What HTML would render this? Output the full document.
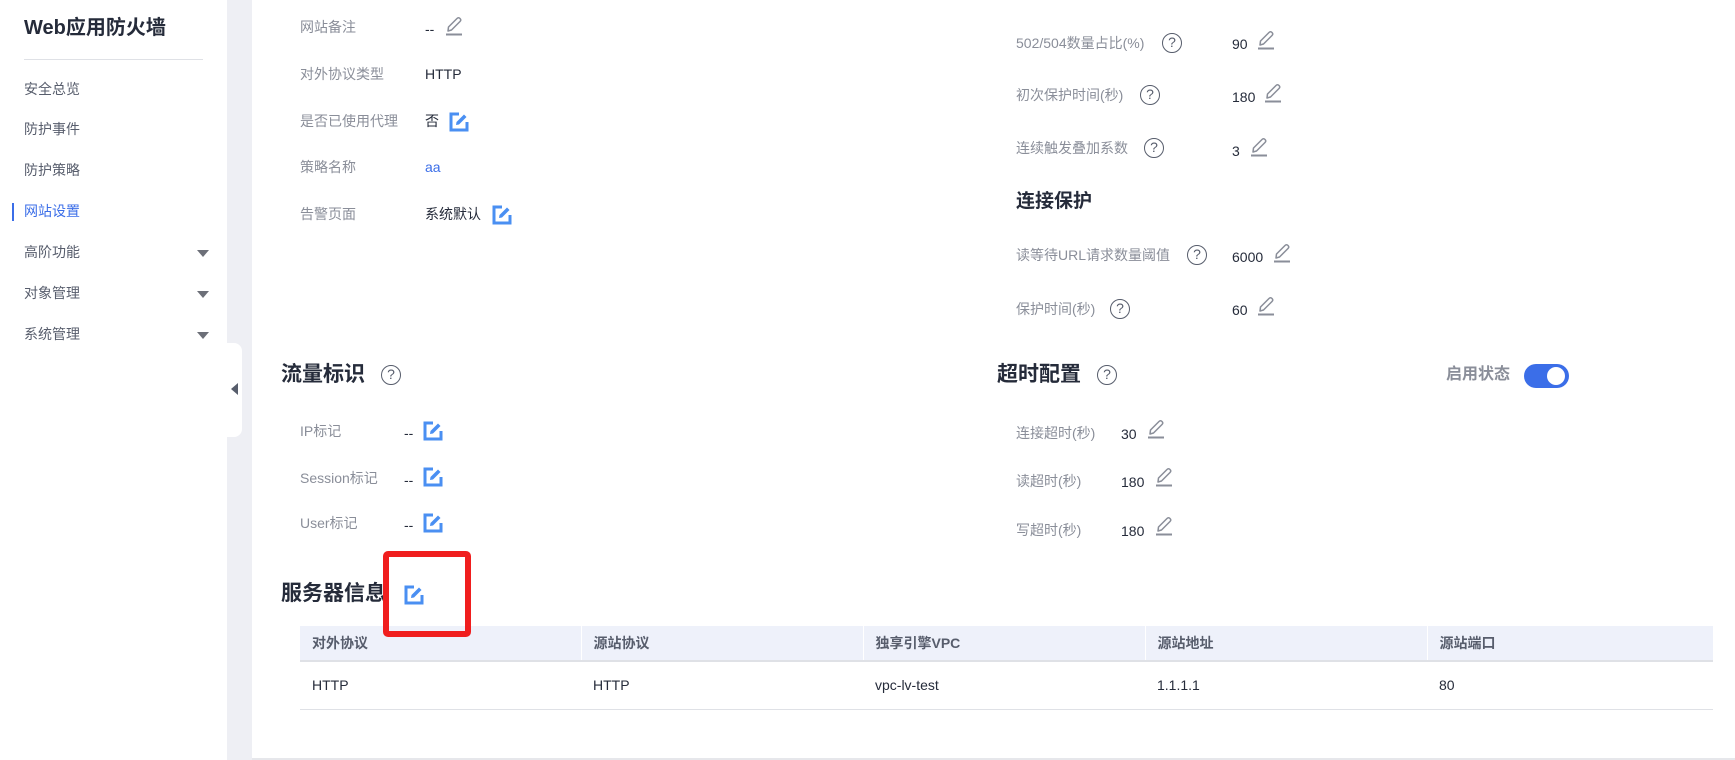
<!DOCTYPE html>
<html><head><meta charset="utf-8"><style>
*{margin:0;padding:0;box-sizing:border-box}
body{width:1735px;height:760px;position:relative;overflow:hidden;background:#fff;font-family:"Liberation Sans","Noto Sans CJK SC",sans-serif;color:#252b3a;font-size:14px}
.a{position:absolute;white-space:nowrap;line-height:1}
.lbl{color:#8a8e99;font-size:14px}
.val{color:#252b3a;font-size:14px}
.menu{color:#575d6c;font-size:14px}
.h{font-weight:bold;font-size:21px;color:#252b3a}
.q{position:absolute;width:20px;height:20px;border:1.6px solid #575d6c;border-radius:50%;font-size:14px;color:#575d6c;text-align:center;line-height:17px}
.arr{position:absolute;width:0;height:0;border-left:6px solid transparent;border-right:6px solid transparent;border-top:7px solid #6c6f78}
th,td{text-align:left;font-size:14px;padding-left:12px}
</style></head><body>
<svg width="0" height="0" style="position:absolute"><defs>
<symbol id="gp" viewBox="0 0 18 20"><path d="M3 15 L3.5 11 L12 2.5 Q13.5 1 15 2.5 Q16.5 4 15 5.5 L6.5 14 Z" fill="none" stroke="#8a8e99" stroke-width="1.5" stroke-linejoin="round"/><line x1="1" y1="18.5" x2="17" y2="18.5" stroke="#8a8e99" stroke-width="2"/></symbol>
<symbol id="bp" viewBox="0 0 20 20"><path d="M10 2 H2 V18 H18 V10" fill="none" stroke="#4a8ff2" stroke-width="3"/><path d="M7 13 L7.5 10 L15 2.5 L17.5 5 L10 12.5 Z" fill="#4a8ff2"/></symbol>
</defs></svg>

<div class="a" style="left:227px;top:0;width:25px;height:760px;background:#eeeff4"></div>
<div class="a" style="left:227px;top:343px;width:15px;height:94px;background:#fff;border-radius:0 8px 8px 0"></div>
<div class="a" style="left:231px;top:383px;width:0;height:0;border-top:6px solid transparent;border-bottom:6px solid transparent;border-right:7px solid #575d6c"></div>
<div class="a" style="left:24px;top:18px;font-size:20px;font-weight:bold;color:#252b3a">Web应用防火墙</div>
<div class="a" style="left:24px;top:59px;width:179px;height:1px;background:#dfe1e6"></div>
<div class="a menu" style="left:24px;top:82px">安全总览</div>
<div class="a menu" style="left:24px;top:122px">防护事件</div>
<div class="a menu" style="left:24px;top:163px">防护策略</div>
<div class="a" style="left:12px;top:203px;width:2px;height:18px;background:#3b6ee8"></div>
<div class="a menu" style="left:24px;top:204px;color:#3b6ee8">网站设置</div>
<div class="a menu" style="left:24px;top:245px">高阶功能</div><div class="arr" style="left:197px;top:250px"></div>
<div class="a menu" style="left:24px;top:286px">对象管理</div><div class="arr" style="left:197px;top:291px"></div>
<div class="a menu" style="left:24px;top:327px">系统管理</div><div class="arr" style="left:197px;top:332px"></div>

<div class="a" style="left:252px;top:758px;width:1483px;height:2px;background:#e6e7eb"></div>

<div class="a lbl" style="left:300px;top:20px">网站备注</div>
<div class="a val" style="left:425px;top:22px">--</div>
<svg class="a" style="left:445px;top:16px" width="18" height="20"><use href="#gp"/></svg>
<div class="a lbl" style="left:300px;top:67px">对外协议类型</div>
<div class="a val" style="left:425px;top:67px">HTTP</div>
<div class="a lbl" style="left:300px;top:114px">是否已使用代理</div>
<div class="a val" style="left:425px;top:114px">否</div>
<svg class="a" style="left:449px;top:112px" width="20" height="20"><use href="#bp"/></svg>
<div class="a lbl" style="left:300px;top:160px">策略名称</div>
<div class="a val" style="left:425px;top:160px;color:#3b6ee8">aa</div>
<div class="a lbl" style="left:300px;top:207px">告警页面</div>
<div class="a val" style="left:425px;top:207px">系统默认</div>
<svg class="a" style="left:492px;top:205px" width="20" height="20"><use href="#bp"/></svg>

<div class="a lbl" style="left:1016px;top:36px">502/504数量占比(%)</div><div class="q" style="left:1162px;top:33px">?</div>
<div class="a val" style="left:1232px;top:37px">90</div><svg class="a" style="left:1257px;top:30px" width="18" height="20"><use href="#gp"/></svg>
<div class="a lbl" style="left:1016px;top:88px">初次保护时间(秒)</div><div class="q" style="left:1140px;top:85px">?</div>
<div class="a val" style="left:1232px;top:90px">180</div><svg class="a" style="left:1264px;top:83px" width="18" height="20"><use href="#gp"/></svg>
<div class="a lbl" style="left:1016px;top:141px">连续触发叠加系数</div><div class="q" style="left:1144px;top:138px">?</div>
<div class="a val" style="left:1232px;top:144px">3</div><svg class="a" style="left:1250px;top:137px" width="18" height="20"><use href="#gp"/></svg>
<div class="a h" style="left:1016px;top:192px;font-size:19px">连接保护</div>
<div class="a lbl" style="left:1016px;top:248px">读等待URL请求数量阈值</div><div class="q" style="left:1187px;top:245px">?</div>
<div class="a val" style="left:1232px;top:250px">6000</div><svg class="a" style="left:1273px;top:243px" width="18" height="20"><use href="#gp"/></svg>
<div class="a lbl" style="left:1016px;top:302px">保护时间(秒)</div><div class="q" style="left:1110px;top:299px">?</div>
<div class="a val" style="left:1232px;top:303px">60</div><svg class="a" style="left:1257px;top:296px" width="18" height="20"><use href="#gp"/></svg>

<div class="a h" style="left:281px;top:364px">流量标识</div><div class="q" style="left:381px;top:365px">?</div>
<div class="a lbl" style="left:300px;top:424px">IP标记</div><div class="a val" style="left:404px;top:426px">--</div>
<svg class="a" style="left:423px;top:421px" width="20" height="20"><use href="#bp"/></svg>
<div class="a lbl" style="left:300px;top:471px">Session标记</div><div class="a val" style="left:404px;top:473px">--</div>
<svg class="a" style="left:423px;top:467px" width="20" height="20"><use href="#bp"/></svg>
<div class="a lbl" style="left:300px;top:516px">User标记</div><div class="a val" style="left:404px;top:518px">--</div>
<svg class="a" style="left:423px;top:513px" width="20" height="20"><use href="#bp"/></svg>

<div class="a h" style="left:997px;top:364px">超时配置</div><div class="q" style="left:1097px;top:365px">?</div>
<div class="a" style="left:1446px;top:367px;font-size:16px;font-weight:bold;color:#8a8e99">启用状态</div>
<div class="a" style="left:1524px;top:364px;width:45px;height:24px;border-radius:12px;background:#3b6ee8"></div>
<div class="a" style="left:1547px;top:367px;width:18px;height:18px;border-radius:50%;background:#fff"></div>
<div class="a lbl" style="left:1016px;top:426px">连接超时(秒)</div><div class="a val" style="left:1121px;top:427px">30</div>
<svg class="a" style="left:1147px;top:419px" width="18" height="20"><use href="#gp"/></svg>
<div class="a lbl" style="left:1016px;top:474px">读超时(秒)</div><div class="a val" style="left:1121px;top:475px">180</div>
<svg class="a" style="left:1155px;top:467px" width="18" height="20"><use href="#gp"/></svg>
<div class="a lbl" style="left:1016px;top:523px">写超时(秒)</div><div class="a val" style="left:1121px;top:524px">180</div>
<svg class="a" style="left:1155px;top:516px" width="18" height="20"><use href="#gp"/></svg>

<div class="a h" style="left:281px;top:583px">服务器信息</div>
<svg class="a" style="left:404px;top:585px" width="20" height="20"><use href="#bp"/></svg>
<table class="a" style="left:300px;top:626px;width:1413px;border-collapse:collapse;table-layout:fixed">
<tr style="background:#eef1fa;height:35px;border-bottom:2px solid #dfe1e6"><th style="width:281px;color:#575d6c">对外协议</th><th style="width:282px;color:#575d6c;border-left:1px solid #fff">源站协议</th><th style="width:282px;color:#575d6c;border-left:1px solid #fff">独享引擎VPC</th><th style="width:282px;color:#575d6c;border-left:1px solid #fff">源站地址</th><th style="color:#575d6c;border-left:1px solid #fff">源站端口</th></tr>
<tr style="height:48px;border-bottom:1px solid #dfe1e6"><td>HTTP</td><td>HTTP</td><td>vpc-lv-test</td><td>1.1.1.1</td><td>80</td></tr>
</table>
<div class="a" style="left:383px;top:551px;width:88px;height:86px;border:6px solid #f01e1e;border-radius:5px"></div>
</body></html>
